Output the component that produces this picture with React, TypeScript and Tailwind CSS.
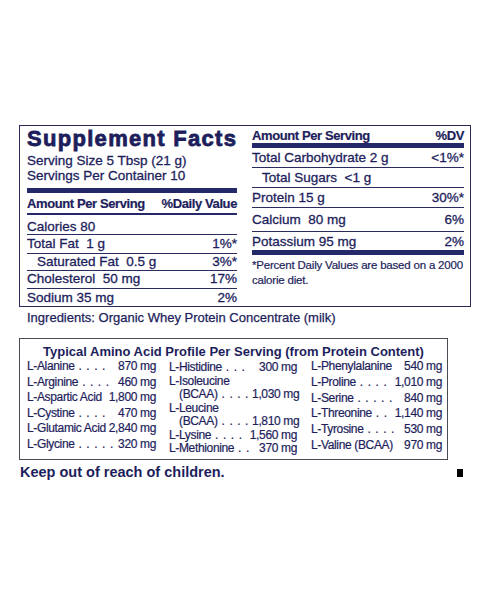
import React from "react";

const navy = "text-[#1d1e5b]";

function FactRow({
  label,
  value,
  h,
  pt,
  indent,
  last,
}: {
  label: React.ReactNode;
  value?: string;
  h: string;
  pt: string;
  indent?: boolean;
  last?: boolean;
}) {
  return (
    <div
      className={`flex justify-between leading-[15px] ${h} ${pt} ${
        last ? "" : "border-b border-[#2a2b5e]"
      } ${indent ? "pl-[10px]" : ""}`}
    >
      <span className="whitespace-pre">{label}</span>
      {value && <span className="whitespace-pre">{value}</span>}
    </div>
  );
}

// name may end in a dot leader (" . . ."), which is set wider like the print label
function AminoRow({ name, amount, indent }: { name: string; amount?: string; indent?: boolean }) {
  const m = name.match(/^(.*?)( \.[ .]*)$/);
  const text = m ? m[1] : name;
  const leader = m ? m[2] : "";
  return (
    <div className={`flex justify-between gap-[3px] whitespace-pre ${indent ? "pl-[10px]" : ""}`}>
      <span>
        {text}
        {leader && <span className="tracking-[0.6px]">{leader}</span>}
      </span>
      {amount && <span>{amount}</span>}
    </div>
  );
}

const col1 = [
  ["L-Alanine . . . .", "870 mg"],
  ["L-Arginine . . . .", "460 mg"],
  ["L-Aspartic Acid", "1,800 mg"],
  ["L-Cystine . . . .", "470 mg"],
  ["L-Glutamic Acid", "2,840 mg"],
  ["L-Glycine . . . . .", "320 mg"],
];

const col3 = [
  ["L-Phenylalanine", "540 mg"],
  ["L-Proline . . . .", "1,010 mg"],
  ["L-Serine . . . . .", "840 mg"],
  ["L-Threonine . .", "1,140 mg"],
  ["L-Tyrosine . . . .", "530 mg"],
  ["L-Valine (BCAA)", "970 mg"],
];

export default function App() {
  return (
    <div
      className={`w-[490px] h-[600px] bg-white pt-[125px] font-['Liberation_Sans',Arial,sans-serif] ${navy}`}
    >
      {/* Facts panel */}
      <div className="ml-[19px] w-[452px] h-[182px] border border-[#2b2b55] flex">
        {/* left column */}
        <div className="ml-[7px] w-[210px] text-[13.5px] [-webkit-text-stroke:0.3px]">
          <div className="h-[27px] leading-[26px] text-[22px] font-bold tracking-[1.3px] [-webkit-text-stroke:0.8px] whitespace-nowrap">
            Supplement Facts
          </div>
          <div className="leading-[15px]">Serving Size 5 Tbsp (21 g)</div>
          <div className="leading-[15px]">Servings Per Container 10</div>
          <div className="mt-[5px] h-[5px] bg-[#262969]" />
          <div className="h-[20px] pt-[3px] flex justify-between whitespace-nowrap leading-[15px] font-bold text-[13px] tracking-[-0.4px] [-webkit-text-stroke:0.2px]">
            <span>Amount Per Serving</span>
            <span>%Daily Value</span>
          </div>
          <div className="h-[2px] bg-[#262969]" />
          <FactRow label="Calories 80" h="h-[20px]" pt="pt-[4px]" />
          <FactRow label="Total Fat  1 g" value="1%*" h="h-[19px]" pt="pt-[1px]" />
          <FactRow label="Saturated Fat  0.5 g" value="3%*" h="h-[17px]" pt="pt-[0px]" indent />
          <FactRow label="Cholesterol  50 mg" value="17%" h="h-[18px]" pt="pt-[0px]" />
          <FactRow label="Sodium 35 mg" value="2%" h="h-[17px]" pt="pt-[1px]" last />
        </div>

        {/* right column */}
        <div className="ml-[15px] w-[212px] text-[13.5px] [-webkit-text-stroke:0.3px]">
          <div className="h-[17px] pt-[2px] flex justify-between whitespace-nowrap leading-[15px] font-bold text-[13px] tracking-[-0.4px] [-webkit-text-stroke:0.2px]">
            <span>Amount Per Serving</span>
            <span>%DV</span>
          </div>
          <div className="h-[5px] bg-[#262969]" />
          <FactRow label="Total Carbohydrate 2 g" value="<1%*" h="h-[20px]" pt="pt-[2px]" />
          <FactRow label="Total Sugars  <1 g" h="h-[20px]" pt="pt-[2px]" indent />
          <FactRow label="Protein 15 g" value="30%*" h="h-[20px]" pt="pt-[2px]" />
          <FactRow label="Calcium  80 mg" value="6%" h="h-[24px]" pt="pt-[4px]" />
          <FactRow label="Potassium 95 mg" value="2%" h="h-[18px]" pt="pt-[2px]" last />
          <div className="h-[5px] bg-[#262969]" />
          <p className="pt-[3px] text-[11.5px] leading-[14.5px] tracking-[-0.2px] whitespace-nowrap [-webkit-text-stroke:0.2px]">
            *Percent Daily Values are based on a 2000
            <br />
            calorie diet.
          </p>
        </div>
      </div>

      <p className="mt-[3px] ml-[27px] text-[13px] leading-[15px] [-webkit-text-stroke:0.25px]">
        Ingredients: Organic Whey Protein Concentrate (milk)
      </p>

      {/* Amino acid profile */}
      <div className="mt-[13px] ml-[19px] w-[429px] h-[122px] border border-[#4b4b55] pt-[5px]">
        <div className="text-center text-[13px] leading-[15px] font-bold">
          Typical Amino Acid Profile Per Serving (from Protein Content)
        </div>
        <div className="flex pl-[7px] text-[12px] tracking-[-0.35px] [-webkit-text-stroke:0.2px]">
          <div className="w-[129px] leading-[15.6px]">
            {col1.map(([n, a]) => (
              <AminoRow key={n} name={n} amount={a} />
            ))}
          </div>
          <div className="ml-[13px] w-[128px] pt-[2px] leading-[13.5px]">
            <AminoRow name="L-Histidine . . ." amount="300 mg" />
            <AminoRow name="L-Isoleucine" />
            <AminoRow name="(BCAA) . . . ." amount="1,030 mg" indent />
            <AminoRow name="L-Leucine" />
            <AminoRow name="(BCAA) . . . ." amount="1,810 mg" indent />
            <AminoRow name="L-Lysine . . . ." amount="1,560 mg" />
            <AminoRow name="L-Methionine . ." amount="370 mg" />
          </div>
          <div className="ml-[14px] w-[131px] leading-[15.8px]">
            {col3.map(([n, a]) => (
              <AminoRow key={n} name={n} amount={a} />
            ))}
          </div>
        </div>
      </div>

      <div className="ml-[20px] mt-[4px] w-[443px] flex items-center justify-between">
        <span className="text-[14.5px] leading-[16px] font-bold">Keep out of reach of children.</span>
        <span className="mt-[2px] w-[6px] h-[8px] bg-black" />
      </div>
    </div>
  );
}
